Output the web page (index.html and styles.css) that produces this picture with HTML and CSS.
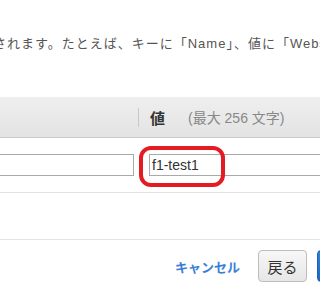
FILE: index.html
```html
<!DOCTYPE html>
<html lang="ja">
<head>
<meta charset="utf-8">
<link rel="stylesheet" href="styles.css">
</head>
<body>
<div class="page">
  <p class="intro">されます。たとえば、キーに「Name」、値に「Webserver」と入力します。</p>
  <div class="thead">
    <div class="th-key"></div>
    <div class="th-sep"></div>
    <div class="th-val"><span class="th-label">値</span><span class="th-hint">(最大 256 文字)</span></div>
  </div>
  <div class="trow">
    <input class="in in-key" type="text" value="">
    <input class="in in-val" type="text" value="f1-test1">
    <div class="mark"></div>
  </div>
  <div class="spacer"></div>
  <div class="footer">
    <a class="cancel">キャンセル</a>
    <button class="btn btn-back">戻る</button>
    <button class="btn btn-primary">確認</button>
  </div>
</div>
</body>
</html>
```
FILE: styles.css
```css
html, body {
  margin: 0;
  padding: 0;
  background: #fff;
}
.page {
  width: 320px;
  height: 298px;
  overflow: hidden;
  font-family: "Liberation Sans", Arial, "Noto Sans CJK JP", sans-serif;
  color: #444;
}
.intro {
  margin: 0 0 0 -7px;
  padding-top: 36px;
  height: 61px;
  line-height: 16px;
  font-size: 13px;
  letter-spacing: 1px;
  white-space: nowrap;
  color: #555;
}
.thead {
  display: flex;
  align-items: center;
  height: 40px;
  background: linear-gradient(#efefef, #e3e3e3);
  border-bottom: 1px solid #c9c9c9;
}
.th-key {
  width: 138px;
}
.th-sep {
  width: 1px;
  height: 19px;
  background: #c8c8c8;
}
.th-val {
  display: flex;
  align-items: center;
  margin-left: 11px;
  white-space: nowrap;
}
.th-label {
  font-weight: bold;
  font-size: 15px;
  color: #333;
}
.th-hint {
  margin-left: 23px;
  font-size: 14px;
  color: #888;
}
.trow {
  position: relative;
  display: flex;
  gap: 15px;
  padding-top: 16px;
  height: 38px;
  border-bottom: 1px solid #e2e2e2;
}
.in {
  box-sizing: border-box;
  height: 22px;
  border: 1px solid #a9a9a9;
  padding: 0 2px;
  font-family: "Liberation Sans", Arial, sans-serif;
  font-size: 14px;
  color: #333;
  background: #fff;
  outline: none;
}
.in-key {
  width: 144px;
  margin-left: -10px;
}
.in-val {
  flex: 1;
  margin-right: -40px;
}
.mark {
  position: absolute;
  left: 139px;
  top: 8px;
  width: 86px;
  height: 41px;
  box-sizing: border-box;
  border: 4px solid #e41b23;
  border-radius: 12px;
}
.spacer {
  height: 46px;
  border-bottom: 1px solid #e4e4e4;
}
.footer {
  display: flex;
  align-items: center;
  gap: 15px;
  padding: 10px 0 0 175px;
  white-space: nowrap;
}
.cancel {
  flex: none;
  font-size: 13px;
  font-weight: bold;
  color: #3b7ed6;
  width: 68px;
}
.btn {
  box-sizing: border-box;
  height: 32px;
  border-radius: 4px;
  font-family: "Liberation Sans", Arial, "Noto Sans CJK JP", sans-serif;
  font-size: 15px;
  flex: none;
}
.btn-back {
  width: 49px;
  border: 1px solid #bdbdbd;
  background: linear-gradient(#f7f7f7, #e6e6e6);
  color: #333;
  padding: 0;
}
.btn-primary {
  margin-left: -5px;
  width: 60px;
  border: 1px solid #1b5fb8;
  background: linear-gradient(#2f80dd, #1d68c4);
  color: #fff;
}
```
